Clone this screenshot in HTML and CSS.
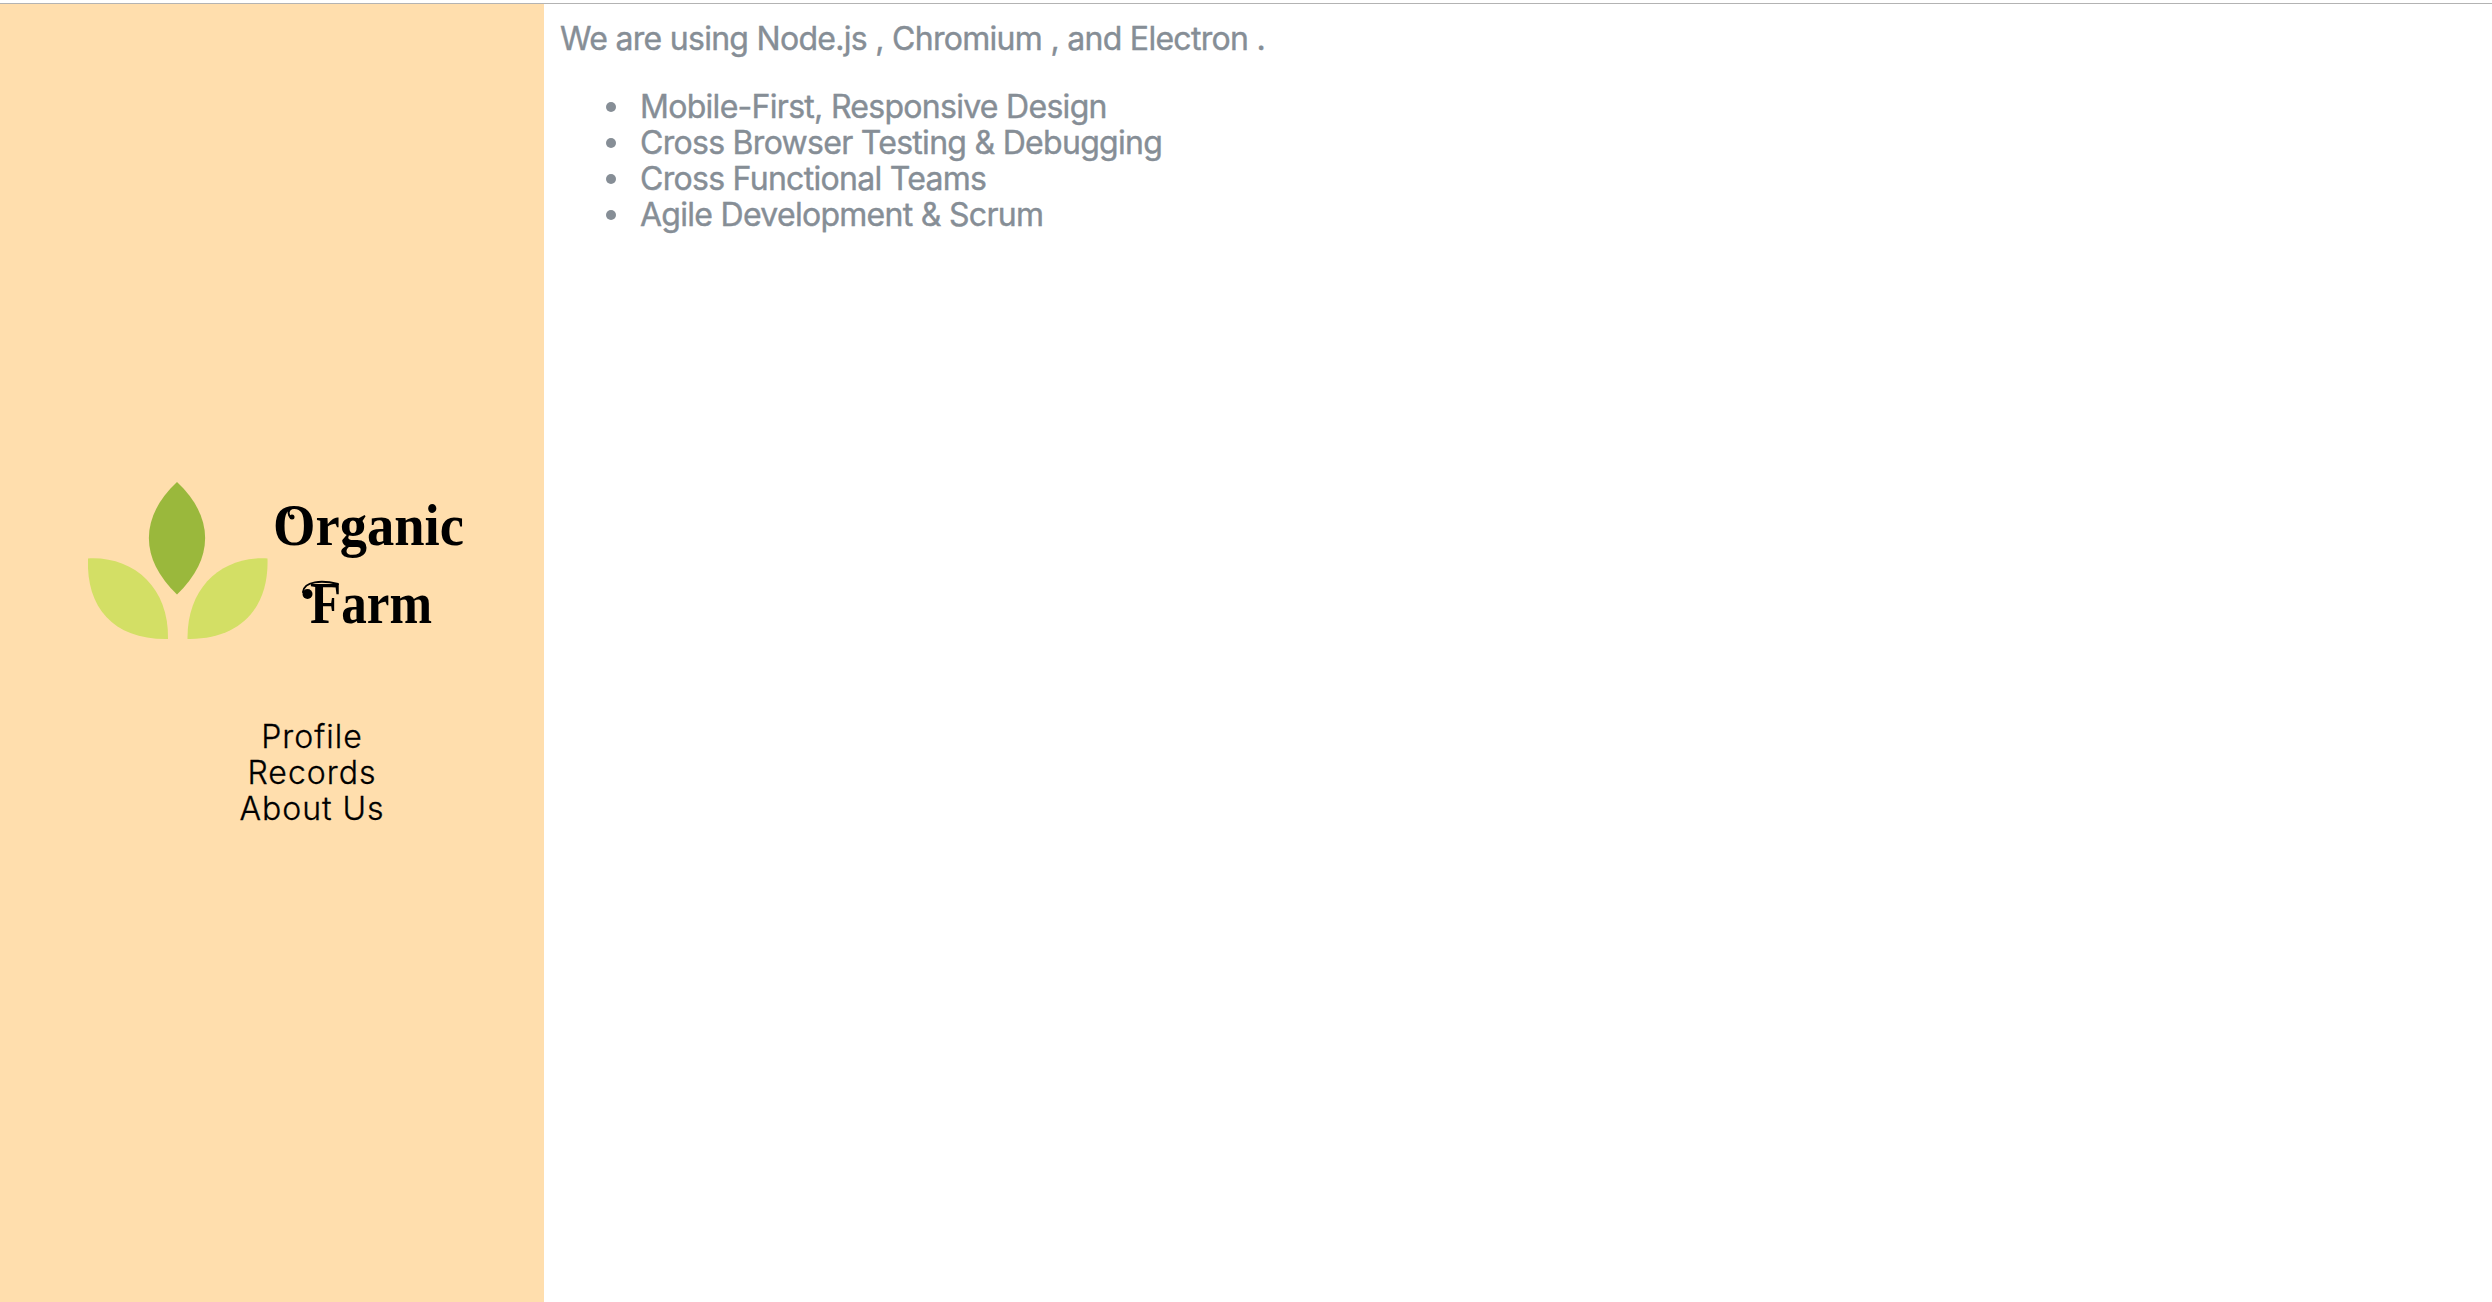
FILE: index.html
```html
<!DOCTYPE html>
<html lang="en">
<head>
    <meta charset="UTF-8">
    <meta name="viewport" content="width=device-width, initial-scale=1.0">
    <title>Organic Farm</title>
    <link rel="stylesheet" href="styles.css">
</head>
<body>
    <div class="sidebar">
        <svg class="logo" viewBox="0 0 410 200" role="img" aria-label="Organic Farm">
            <path class="leaf-dark" d="M107 22C69.500 57 69.500 99 107 134.500C144.500 99 144.500 57 107 22Z"/>
            <path class="leaf-light" d="M18 98.500C62 96 99 126 98 179C44 180 16 148 18 98.500Z"/>
            <path class="leaf-light" d="M197.500 98.500C153 96 117 126 117.500 179C170 180 199 148 197.500 98.500Z"/>
            <text class="logo-text" x="203" y="84.500" textLength="191" lengthAdjust="spacingAndGlyphs">Organic</text>
            <text class="logo-text" x="240" y="162.500" textLength="122" lengthAdjust="spacingAndGlyphs">Farm</text>
            <!-- curls on the capitals -->
            <path class="curl" d="M224 47C218 49 217 54 221 58"/>
            <circle cx="222" cy="57" r="2.500"/>
            <path class="curl" d="M268 124C252 120 234 121 233 132"/>
            <circle cx="237.500" cy="134" r="5"/>
        </svg>
        <ul class="menu">
            <li>Profile</li>
            <li>Records</li>
            <li>About Us</li>
        </ul>
    </div>
    <div class="content">
        <p class="intro">We are using Node.js , Chromium , and Electron .</p>
        <ul class="skills">
            <li>Mobile-First, Responsive Design</li>
            <li>Cross Browser Testing &amp; Debugging</li>
            <li>Cross Functional Teams</li>
            <li>Agile Development &amp; Scrum</li>
        </ul>
    </div>
</body>
</html>
```
FILE: styles.css
```css
* {
    box-sizing: border-box;
}
body {
    display: flex;
    height: 100vh;
    margin: 0;
    padding-top: 3px;
    font-family: Inter, sans-serif;
    font-size: 32px;
    line-height: 36px;
    color: #868e96;
    background: linear-gradient(#b3b3b3, #b3b3b3) 0 3px / 100% 1px no-repeat #fff;
}
.sidebar {
    width: 544px;
    margin-top: 1px;
    padding-top: 456px;
    background-color: #ffdead;
}
.logo {
    display: block;
    width: 410px;
    height: 200px;
    margin-left: 70px;
    overflow: visible;
}
.leaf-dark {
    fill: #9ab83c;
}
.leaf-light {
    fill: #d3df65;
}
.logo-text {
    font-family: "Liberation Serif", serif;
    font-size: 60px;
    font-weight: bold;
    fill: #000;
}
.curl {
    fill: none;
    stroke: #000;
    stroke-width: 2;
    stroke-linecap: round;
}
.menu {
    margin: 59px 0 0;
    padding: 0 0 0 80px;
    list-style: none;
    text-align: center;
    font-weight: 300;
    letter-spacing: 1px;
    color: #000;
    -webkit-text-stroke: 0.3px #000;
}
.content {
    flex: 1;
    padding: 18px 16px;
    letter-spacing: -0.71px;
    -webkit-text-stroke: 0.4px #868e96;
}
.intro {
    margin: 0;
}
.skills {
    margin: 32px 0 0;
    padding-left: 80px;
    list-style: none;
}
.skills li::before {
    content: "";
    display: inline-block;
    width: 10px;
    height: 10px;
    margin-left: -34px;
    margin-right: 24px;
    border-radius: 50%;
    background-color: #868e96;
    vertical-align: 6px;
}
```
